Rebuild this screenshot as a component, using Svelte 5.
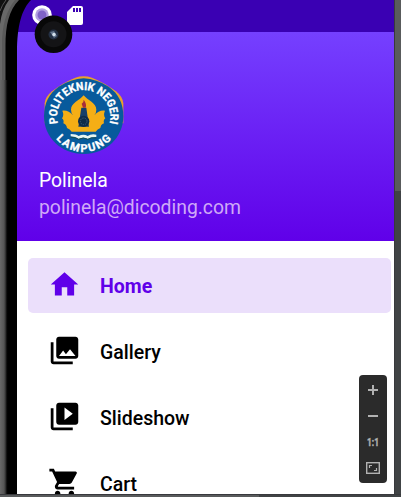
<script>
  const items = [
    { label: 'Home', icon: 'M10 20v-6h4v6h5v-8h3L12 3 2 12h3v8z' },
    { label: 'Gallery', icon: 'M22 16V4c0-1.1-.9-2-2-2H8c-1.1 0-2 .9-2 2v12c0 1.1.9 2 2 2h12c1.1 0 2-.9 2-2zm-11-4 2.03 2.71L16 11l4 5H8zM2 6v14c0 1.1.9 2 2 2h14v-2H4V6z' },
    { label: 'Slideshow', icon: 'M4 6H2v14c0 1.1.9 2 2 2h14v-2H4zm16-4H8c-1.1 0-2 .9-2 2v12c0 1.1.9 2 2 2h12c1.1 0 2-.9 2-2V4c0-1.1-.9-2-2-2zm-8 12.5v-9l6 4.5z' },
    { label: 'Cart', icon: 'M7 18c-1.1 0-1.99.9-1.99 2S5.9 22 7 22s2-.9 2-2-.9-2-2-2zM1 2v2h2l3.6 7.59-1.35 2.45c-.16.28-.25.61-.25.96 0 1.1.9 2 2 2h12v-2H7.42c-.14 0-.25-.11-.25-.25l.03-.12.9-1.63h7.45c.75 0 1.41-.41 1.75-1.03l3.58-6.49A1 1 0 0 0 20 4H5.21l-.94-2zm16 16c-1.1 0-1.99.9-1.99 2s.89 2 1.99 2 2-.9 2-2-.9-2-2-2z' }
  ];
</script>

<div class="window">
  <div class="main">
    <div class="device">
      <div class="bezel"></div>
      <div class="screen">
        <div class="status"></div>
        <header>
          <svg class="logo" width="96" height="90" viewBox="0 0 288 270">
            <path d="M26 100Q28 80 48 64Q82 37 118 23Q143 15 168 23Q204 37 240 64Q260 80 262 100V160H26z" fill="#e9a12c" />
            <path d="M24 139C24 98 40 70 68 50Q105 27 143 25Q181 27 218 50C246 70 262 98 262 139C262 202 211 252 143 252S24 202 24 139z" fill="#075a9c" />
            <path d="M143 76C155 91 181 99 181 119Q181 129 175 136Q188 120 207 122Q201 135 208 145Q201 151 204 160Q194 164 193 174Q184 178 179 185H107Q102 178 93 174Q92 164 82 160Q85 151 78 145Q85 135 79 122Q98 120 111 136Q105 129 105 119C105 99 131 91 143 76z" fill="#f5ae15" />
            <path d="M136 113h15l8 57h-32z" fill="#173f69" />
            <path d="M137 101q7-5 6-12q10 13 6 24h-8z" fill="#a92e3a" />
            <circle cx="143" cy="154" r="17" fill="#102b48" />
            <circle cx="143" cy="154" r="10" fill="none" stroke="#51748f" stroke-width="2" stroke-dasharray="4 3" />
            <path d="M104 192q18 0 24 6q14-8 27 0q10-7 26-4v7q-16-1-25 6q-14-8-28 0q-10-8-24-8z" fill="#e8f5f0" />
            <path d="M104 202q18 0 24 6q14-8 27 0q10-7 26-4" fill="none" stroke="#164e53" stroke-width="3" />
            <path id="upper" d="M73.700 180A80 80 0 1 1 212.300 180" fill="none" />
            <path id="lower" d="M41 171A107 107 0 0 0 245 171" fill="none" />
            <text class="seal" font-size="34"><textPath href="#upper" startOffset="50%" text-anchor="middle" textLength="292" lengthAdjust="spacingAndGlyphs">POLITEKNIK NEGERI</textPath></text>
            <text class="seal" font-size="33"><textPath href="#lower" startOffset="50%" text-anchor="middle" textLength="190" lengthAdjust="spacing">LAMPUNG</textPath></text>
          </svg>
          <div class="name">Polinela</div>
          <div class="email">polinela@dicoding.com</div>
        </header>
        <nav>
          {#each items as item, i}
            <div class="item" class:active={i === 0}>
              <svg width="33" height="33" viewBox="0 0 24 24"><path d={item.icon} fill="currentColor" /></svg>
              <span>{item.label}</span>
            </div>
          {/each}
        </nav>
      </div>
      <svg class="frame" width="100" height="80" viewBox="0 0 100 80">
        <path d="M0 0H31C22 9 17 25 17 53V80H0z" fill="#000" />
        <path d="M0 0H19C9 10 5.500 25 5.500 46V80H0z" fill="#595959" />
        <path d="M0 0H15C6 11 2 26 2 45V80H0z" fill="#686868" />
        <path d="M0 0H9Q2 9 0 24z" fill="#111" />
        <path d="M0 11Q2 5 6 0" stroke="#555" fill="none" />
        <circle cx="42" cy="15" r="9.800" fill="#fff" />
        <circle cx="42" cy="15" r="6.800" fill="#b3a0e2" />
        <circle cx="42" cy="15" r="4.500" fill="#8063c8" />
        <path d="M73 6h8q2 0 2 2v15q0 2-2 2H69q-2 0-2-2V12z" fill="#fff" />
        <path d="M73 8h2v4h-2zm3 0h2v4h-2zm3 0h2v4h-2z" fill="#3a00b3" />
        <circle cx="53.500" cy="34.300" r="18.800" fill="#080808" />
        <circle cx="53.500" cy="34.300" r="13" fill="#141416" />
        <circle cx="53.500" cy="34.500" r="5" fill="#243044" />
        <path d="M50 32l4-1 3 5-3 2z" fill="#63758d" />
        <circle cx="54" cy="34.500" r="1.700" fill="#d3dfea" />
      </svg>
      <div class="zoom">
        <svg width="28" height="108" viewBox="0 0 28 108" fill="none" stroke="#b2b2b2">
          <path d="M9 15h10M14 10v10M9 41h10" stroke-width="2" />
          <text x="14" y="71" text-anchor="middle" textLength="12" lengthAdjust="spacingAndGlyphs">1:1</text>
          <rect x="7.700" y="87.700" width="12.600" height="10.600" stroke-width="1.400" />
          <path d="M10.500 93v-2.500H13M15 95.500h2.500V93" stroke-width="1.200" />
        </svg>
      </div>
    </div>
    <div class="vbar"><div></div></div>
  </div>
  <div class="hbar"><div></div></div>
</div>

<style>
  .window { width: 401px; height: 497px; display: flex; flex-direction: column; overflow: hidden; background: #3c3f41; font-family: Roboto, sans-serif; }
  .main { height: 494px; flex: none; display: flex; }
  .device { position: relative; width: 394px; height: 494px; display: flex; overflow: hidden; background: #fff; }
  .bezel { width: 17px; flex: none; background: linear-gradient(90deg, #686868 0, #555 4px, #333 5.500px, #050505 7px, #000 8px); }
  .screen { flex: 1; min-width: 0; }
  .status { height: 32px; background: #3a00b3; }
  header { height: 209px; box-sizing: border-box; padding: 38px 0 0 19px; background: linear-gradient(#7540ff, #6000e9); }
  .logo { display: block; }
  .seal { font-family: Roboto, sans-serif; font-weight: 700; fill: #fff; stroke: #fff; stroke-width: 1; }
  .name, .email { margin-left: 3px; font-size: 19.350px; line-height: 26px; color: #fff; white-space: nowrap; }
  .name { margin-top: 8px; }
  .email { margin-top: 1px; color: #cfa9f7; }
  nav { display: flex; flex-direction: column; gap: 11px; padding: 16.500px 3px 0 11px; }
  .item { height: 55px; flex: none; box-sizing: border-box; display: flex; align-items: center; gap: 19.500px; padding-left: 19.500px; border-radius: 5px; font-size: 19.500px; font-weight: 500; line-height: 26px; color: #000; }
  .item svg { display: block; margin-top: -1px; }
  .item span { padding-top: 3px; }
  .active { background: #ebdffb; color: #6000e9; font-weight: 700; }
  .frame { position: absolute; left: 0; top: 0; }
  .zoom { position: absolute; left: 359px; top: 375px; width: 28px; height: 108px; border-radius: 4px; background: #2b2b2b; }
  .zoom svg { display: block; }
  .zoom text { font: 700 11.500px Roboto, sans-serif; fill: #b2b2b2; stroke: #b2b2b2; stroke-width: .4; }
  .vbar { width: 7px; background: #404345; border-left: 1px solid #38393d; box-sizing: border-box; }
  .vbar div { height: 191px; background: #595b5c; }
  .hbar { height: 3px; box-sizing: border-box; border-top: 1px solid #38393d; background: #404345; }
  .hbar div { width: 259px; height: 2px; background: #595b5c; }
</style>
